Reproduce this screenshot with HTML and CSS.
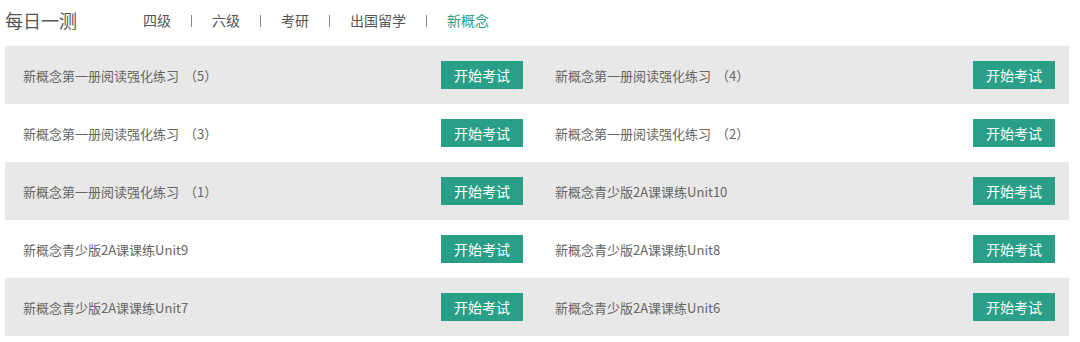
FILE: index.html
```html
<!DOCTYPE html>
<html lang="zh-CN">
<head>
<meta charset="utf-8">
<title>每日一测</title>
<link rel="stylesheet" href="styles.css">
</head>
<body>
<div class="page">
  <header class="header">
    <h1 class="title">每日一测</h1>
    <nav class="nav">
      <a class="nav-item">四级</a><span class="sep"></span>
      <a class="nav-item">六级</a><span class="sep"></span>
      <a class="nav-item">考研</a><span class="sep"></span>
      <a class="nav-item">出国留学</a><span class="sep"></span>
      <a class="nav-item active">新概念</a>
    </nav>
  </header>
  <div class="list">
    <div class="row shaded">
      <div class="item"><span class="name">新概念第一册阅读强化练习<span class="paren">（5）</span></span><button class="btn">开始考试</button></div>
      <div class="item"><span class="name">新概念第一册阅读强化练习<span class="paren">（4）</span></span><button class="btn">开始考试</button></div>
    </div>
    <div class="row">
      <div class="item"><span class="name">新概念第一册阅读强化练习<span class="paren">（3）</span></span><button class="btn">开始考试</button></div>
      <div class="item"><span class="name">新概念第一册阅读强化练习<span class="paren">（2）</span></span><button class="btn">开始考试</button></div>
    </div>
    <div class="row shaded">
      <div class="item"><span class="name">新概念第一册阅读强化练习<span class="paren">（1）</span></span><button class="btn">开始考试</button></div>
      <div class="item"><span class="name">新概念青少版2A课课练Unit10</span><button class="btn">开始考试</button></div>
    </div>
    <div class="row">
      <div class="item"><span class="name">新概念青少版2A课课练Unit9</span><button class="btn">开始考试</button></div>
      <div class="item"><span class="name">新概念青少版2A课课练Unit8</span><button class="btn">开始考试</button></div>
    </div>
    <div class="row shaded">
      <div class="item"><span class="name">新概念青少版2A课课练Unit7</span><button class="btn">开始考试</button></div>
      <div class="item"><span class="name">新概念青少版2A课课练Unit6</span><button class="btn">开始考试</button></div>
    </div>
  </div>
</div>
</body>
</html>
```

FILE: styles.css
```css
* { box-sizing: border-box; }
html, body { margin: 0; padding: 0; background: #fff; }
body {
  font-family: "Noto Sans CJK SC", "Noto Sans", "Liberation Sans", sans-serif;
  color: #666;
}
.page {
  width: 1064px;
  margin-left: 5px;
}
.header {
  height: 46px;
  display: flex;
  align-items: center;
  padding-bottom: 6px;
}
.title {
  margin: 0;
  font-size: 18px;
  font-weight: normal;
  color: #555;
  line-height: 1;
  width: 138px;
}
.nav {
  display: flex;
  align-items: center;
  font-size: 14px;
  line-height: 1;
}
.nav-item { color: #555; text-decoration: none; }
.nav-item.active { color: #2ba089; }
.sep {
  width: 1px;
  height: 12px;
  background: #888;
  margin: 1px 20px 0;
}
.list { display: flex; flex-direction: column; }
.row {
  display: flex;
  height: 58px;
}
.row.shaded { background: #e8e8e8; }
.item {
  flex: 1;
  display: flex;
  align-items: center;
  justify-content: space-between;
  padding: 0 14px 0 18px;
}
.name {
  font-size: 13px;
  color: #666;
}
.paren {
  padding: 0 4px 0 5px;
}
.btn {
  width: 82px;
  height: 28px;
  border: none;
  background: #2a9f88;
  color: #fff;
  font-family: inherit;
  font-size: 14px;
  padding: 0;
  margin-top: -1px;
  cursor: pointer;
}
```
